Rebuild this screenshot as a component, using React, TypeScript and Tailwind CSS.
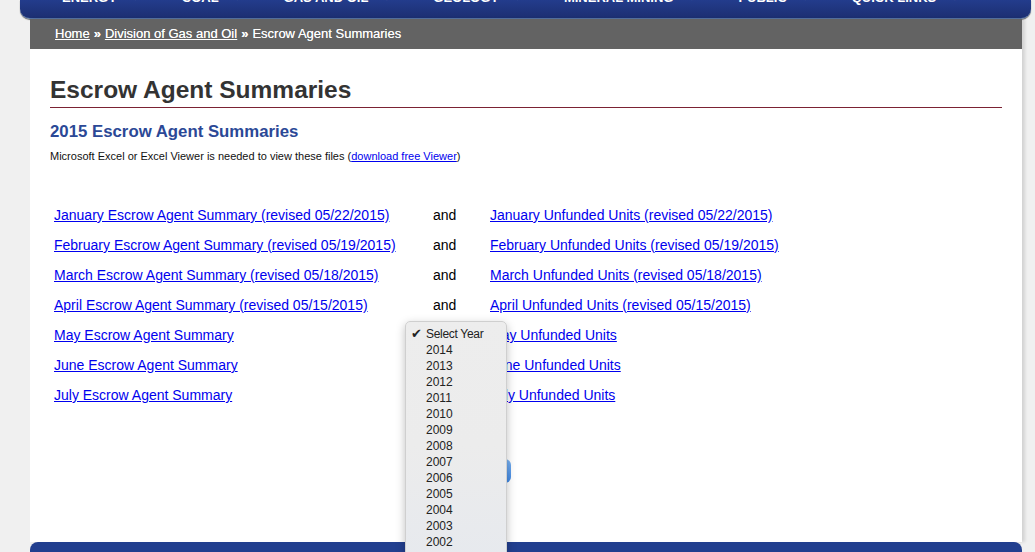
import React from "react";

const navItems = ["ENERGY", "COAL", "GAS AND OIL", "GEOLOGY", "MINERAL MINING", "PUBLIC", "QUICK LINKS"];

const rows: [string, string | null, string][] = [
  ["January Escrow Agent Summary (revised 05/22/2015)", "and", "January Unfunded Units (revised 05/22/2015)"],
  ["February Escrow Agent Summary (revised 05/19/2015)", "and", "February Unfunded Units (revised 05/19/2015)"],
  ["March Escrow Agent Summary (revised 05/18/2015)", "and", "March Unfunded Units (revised 05/18/2015)"],
  ["April Escrow Agent Summary (revised 05/15/2015)", "and", "April Unfunded Units (revised 05/15/2015)"],
  ["May Escrow Agent Summary", null, "May Unfunded Units"],
  ["June Escrow Agent Summary", null, "June Unfunded Units"],
  ["July Escrow Agent Summary", null, "July Unfunded Units"],
];

const years = ["2014", "2013", "2012", "2011", "2010", "2009", "2008", "2007", "2006", "2005", "2004", "2003", "2002"];

export default function App() {
  return (
    <div
      className="relative h-[552px] w-[1035px] overflow-hidden bg-[#f0f0f0]"
      style={{ fontFamily: '"Liberation Sans", Arial, sans-serif' }}
    >
      {/* top nav */}
      <div className="ml-[20px] h-[19px] w-[1011px] overflow-hidden rounded-b-[10px] border-b border-[#5673a3] bg-gradient-to-b from-[#233c8c] to-[#1c2f72] shadow-[0_1px_1px_rgba(0,0,0,0.6)]">
        <div className="-mt-[9px] ml-[42px] flex text-[13px] font-bold leading-[13px] text-white">
          {navItems.map((n) => (
            <div key={n} className="mr-[42px] flex items-center gap-[14px]">
              <span>{n}</span>
              <span className="text-[9px]">▼</span>
            </div>
          ))}
        </div>
      </div>

      {/* panel */}
      <div className="ml-[30px] w-[992px] shadow-[3px_0_3px_rgba(0,0,0,0.12)]">
        <div className="flex h-[30px] items-center bg-[#636363] pl-[25px] text-[13px] text-white [text-shadow:0_0_0.6px_rgba(255,255,255,0.8)]">
          <a className="underline">Home</a>
          <span className="mx-[4px] font-bold">»</span>
          <a className="underline">Division of Gas and Oil</a>
          <span className="mx-[4px] font-bold">»</span>
          <span>Escrow Agent Summaries</span>
        </div>

        <div className="h-[493px] bg-white px-[20px] pt-[25px]">
          <h1 className="border-b border-[#7b2233] pb-[2px] text-[24.5px] font-bold leading-[31px] text-[#333333]">
            Escrow Agent Summaries
          </h1>
          <h2 className="mt-[13px] text-[16.8px] font-bold leading-[22px] text-[#2b4896]">
            2015 Escrow Agent Summaries
          </h2>
          <p className="mt-[6px] text-[11px] leading-[14px] text-[#111111]">
            Microsoft Excel or Excel Viewer is needed to view these files (
            <a className="text-[#0000ee] underline">download free Viewer</a>)
          </p>

          <div className="mt-[37px] grid grid-cols-[379px_57px_auto] pl-[4px] text-[14px] leading-[30px]">
            {rows.map(([l, m, r]) => (
              <React.Fragment key={l}>
                <a className="text-[#0000ee] underline">{l}</a>
                <span className="text-black">{m ?? ""}</span>
                <a className="text-[#0000ee] underline">{r}</a>
              </React.Fragment>
            ))}
          </div>

          <div className="mt-[49px] flex pl-[420px]">
            <button className="h-[24px] w-[41px] rounded-[6px] bg-gradient-to-b from-[#7ab3f2] to-[#3d86e3]" />
          </div>
        </div>
      </div>

      {/* footer */}
      <div className="absolute left-[30px] top-[542px] h-[20px] w-[992px] rounded-t-[8px] bg-[#223f8f]" />

      {/* open select popup */}
      <div className="absolute left-[405px] top-[321px] w-[102px] rounded-[5px] border border-[#cfcfcf] bg-gradient-to-b from-[#ededed] via-[#ececec] to-[#e6e9ee] pt-[4px] pb-[20px] text-[12px] leading-[16px] text-[#222222] shadow-[0_3px_10px_rgba(0,0,0,0.25)]">
        <div className="flex items-center">
          <span className="w-[20px] pl-[5px] text-[13px] font-bold" style={{ fontFamily: '"DejaVu Sans", sans-serif' }}>
            ✔
          </span>
          <span className="tracking-[-0.3px]">Select Year</span>
        </div>
        {years.map((y) => (
          <div key={y} className="pl-[20px]">
            {y}
          </div>
        ))}
      </div>
    </div>
  );
}
